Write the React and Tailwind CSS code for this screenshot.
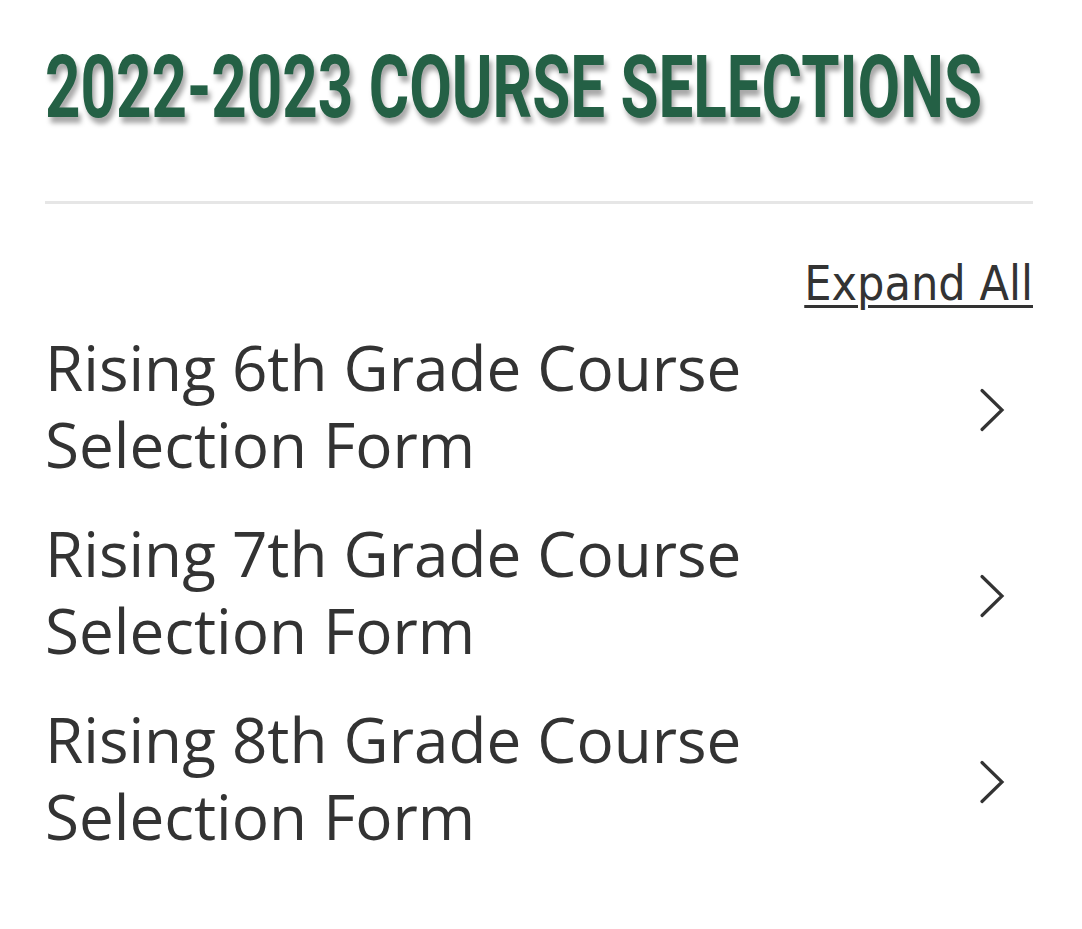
import React from "react";

const items = ["6th", "7th", "8th"];

function Chevron() {
  return (
    <svg width="26" height="44" viewBox="0 0 26 44" fill="none" className="shrink-0 mt-[8px]">
      <path d="M3 2.5 L23 22 L3 41.5" stroke="#333333" strokeWidth="3.2" strokeLinecap="round" strokeLinejoin="miter" />
    </svg>
  );
}

export default function App() {
  return (
    <div className="w-[1082px] h-[929px] bg-white overflow-hidden pl-[45px] pr-[49px] pt-[44px]">
      <h1
        className="text-[#246045] font-bold uppercase leading-none text-[87px] whitespace-nowrap origin-left scale-x-[0.711] [text-shadow:4px_6px_6px_rgba(0,0,0,0.35)]"
        style={{ fontFamily: 'Roboto, "Liberation Sans", sans-serif' }}
      >
        2022-2023 COURSE SELECTIONS
      </h1>
      <div className="mt-[70px] h-[3px] bg-[#e6e6e6]" />
      <div className="flex justify-end mt-[55px]">
        <a
          href="#"
          className="text-[#333333] underline decoration-[3px] underline-offset-[5px] text-[48px] leading-none"
          style={{ fontFamily: '"DejaVu Sans Condensed", sans-serif' }}
        >
          Expand All
        </a>
      </div>
      <div className="mt-[22px] flex flex-col gap-[32px]">
        {items.map((g) => (
          <div key={g} className="flex items-center justify-between pr-[28px]">
            <div
              className="text-[#333333] text-[62px] leading-[77px] w-[720px] whitespace-nowrap"
              style={{ fontFamily: '"Open Sans", "Noto Sans", sans-serif' }}
            >
              Rising {g} Grade Course
              <br />
              Selection Form
            </div>
            <Chevron />
          </div>
        ))}
      </div>
    </div>
  );
}
